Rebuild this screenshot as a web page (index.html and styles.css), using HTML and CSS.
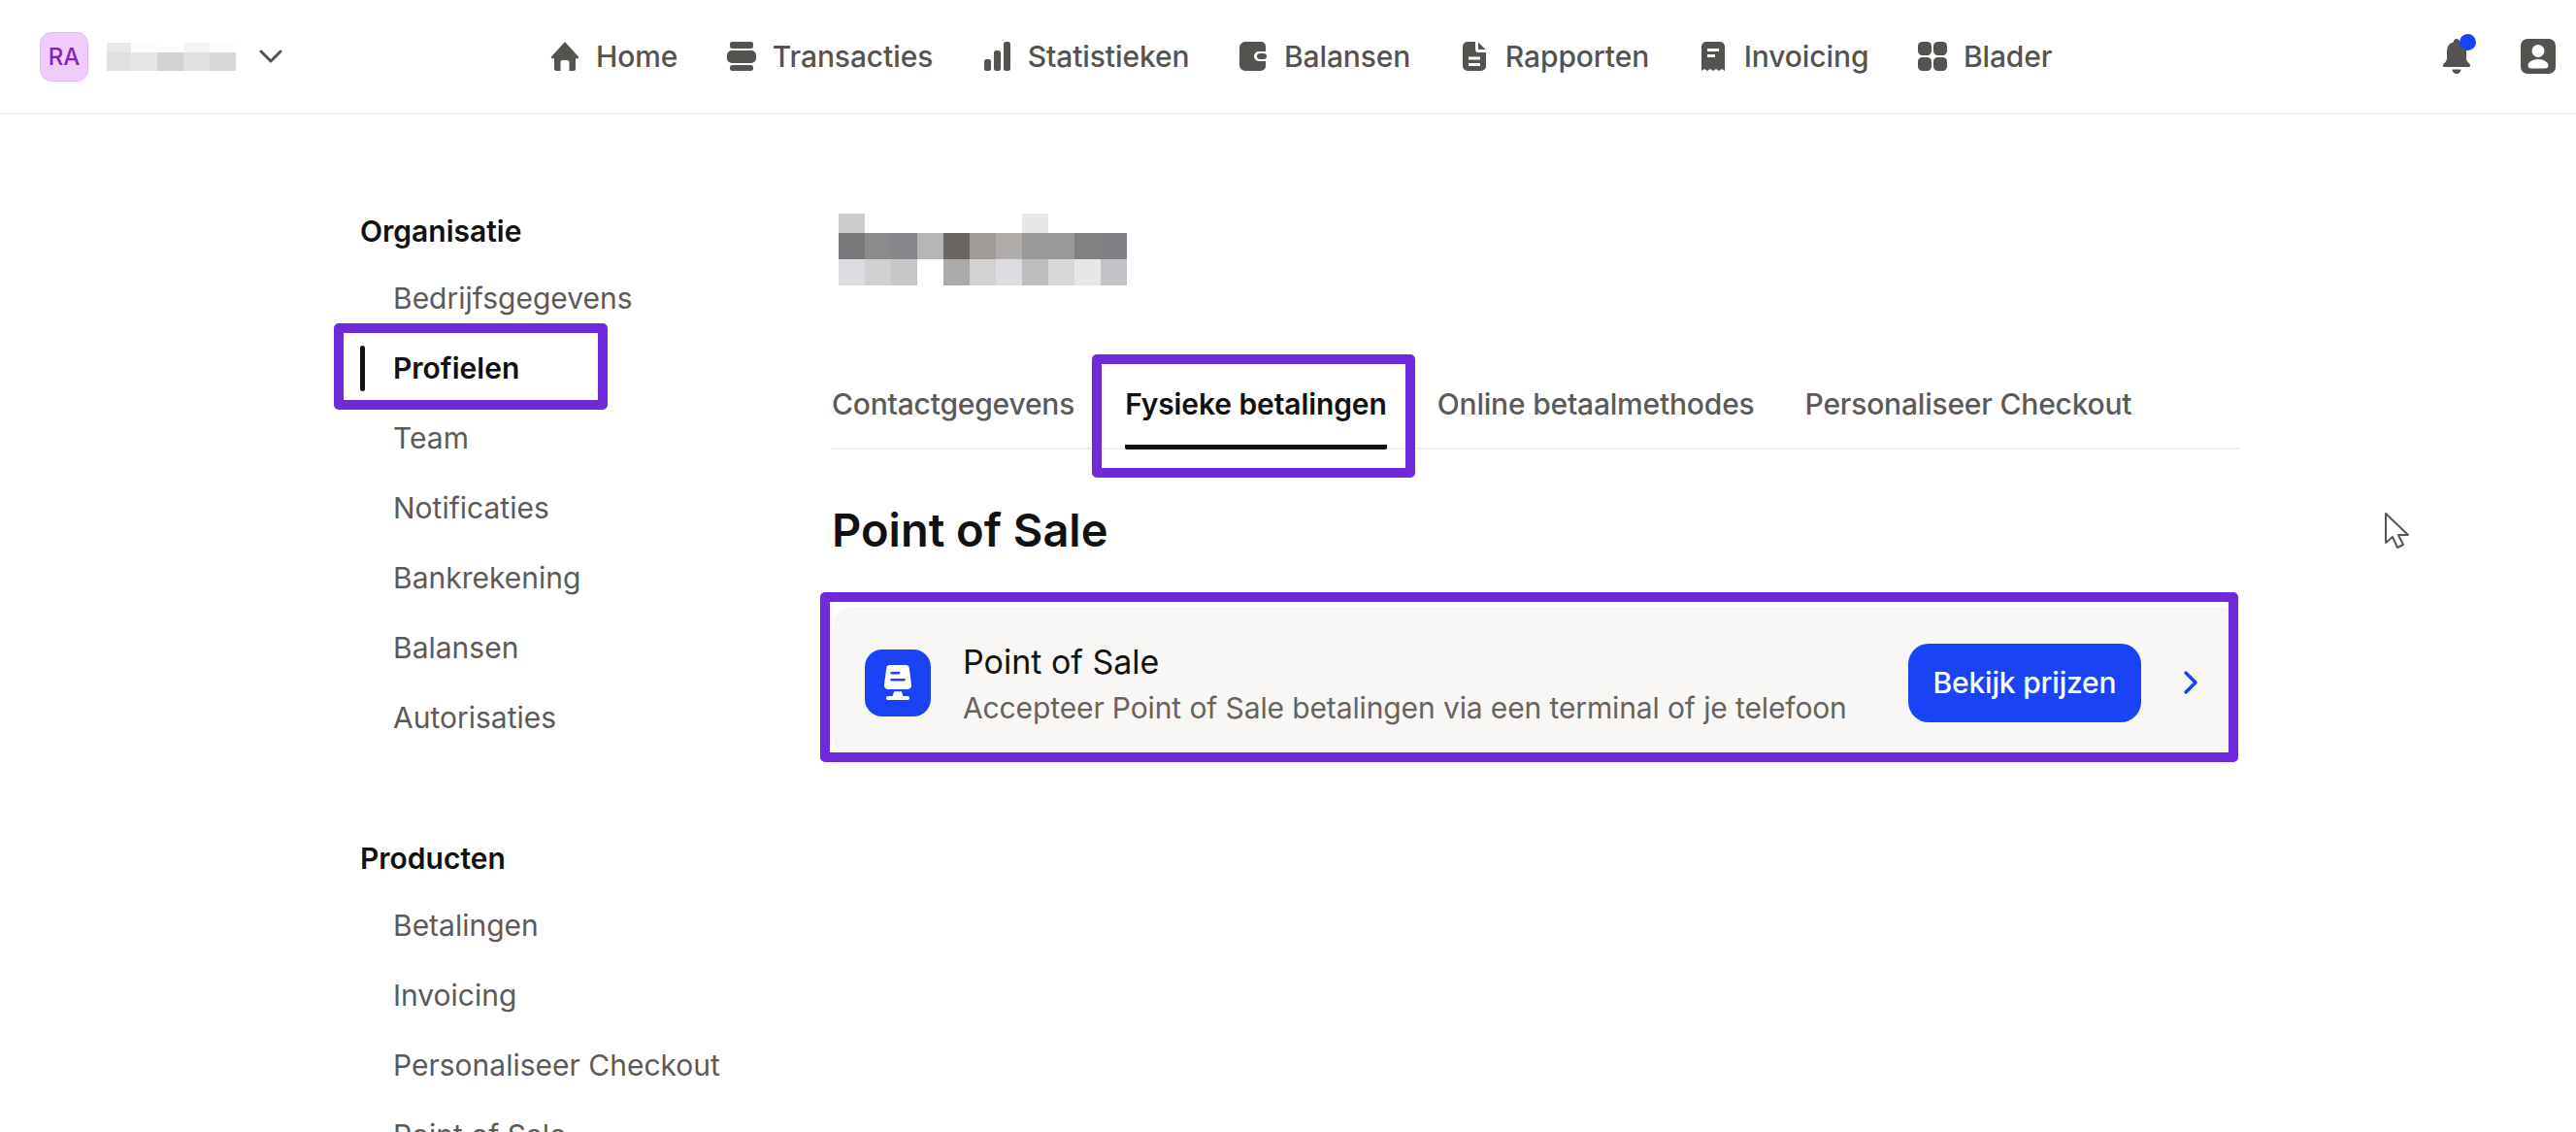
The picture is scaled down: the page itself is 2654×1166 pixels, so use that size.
FILE: index.html
```html
<!DOCTYPE html>
<html lang="en">

<head>
    <meta charset="UTF-8">
    <title>Point of Sale</title>
    <link rel="stylesheet" href="styles.css">
</head>

<body>
    <header class="topbar">
        <div class="account">
            <div class="avatar">RA</div>
            <svg class="redact-name" width="133" height="29" viewBox="0 0 133 29">
                <rect x="0" y="0" width="25" height="10" fill="#e9e9e9" />
                <rect x="25" y="0" width="27" height="10" fill="#fdfdfd" />
                <rect x="79" y="0" width="27" height="10" fill="#f4f4f4" />
                <rect x="106" y="0" width="27" height="10" fill="#fdfdfd" />
                <rect x="0" y="10" width="25" height="19" fill="#e0e0e0" />
                <rect x="25" y="10" width="27" height="19" fill="#e6e6e6" />
                <rect x="52" y="10" width="27" height="19" fill="#d2d2d2" />
                <rect x="79" y="10" width="27" height="19" fill="#e0e0e0" />
                <rect x="106" y="10" width="27" height="19" fill="#d8d8d8" />
            </svg>
            <svg class="account-chevron" width="24" height="16" viewBox="0 0 24 16">
                <path d="M2 3l10 10L22 3" fill="none" stroke="#55534f" stroke-width="3" stroke-linecap="round" stroke-linejoin="round" />
            </svg>
        </div>

        <nav class="mainnav">
            <a class="navitem">
                <svg class="navicon" viewBox="0 0 32 32">
                    <path d="M16 1L30 16.5c.5.7 0 1.7-.9 1.7H27V29a2 2 0 0 1-2 2h-4.500V22a2 2 0 0 0-2-2h-5a2 2 0 0 0-2 2v9H7a2 2 0 0 1-2-2V18.200H2.900c-.9 0-1.400-1-.9-1.700z" />
                </svg>
                Home
            </a>
            <a class="navitem">
                <svg class="navicon" viewBox="0 0 32 32">
                    <rect x="4" y="1" width="24" height="7" rx="2.500" />
                    <rect x="1" y="10" width="30" height="13" rx="5" />
                    <rect x="4" y="25" width="24" height="6" rx="2.500" />
                </svg>
                Transacties
            </a>
            <a class="navitem">
                <svg class="navicon" viewBox="0 0 32 32">
                    <rect x="3" y="19" width="7" height="12" rx="2.500" />
                    <rect x="13" y="10" width="7" height="21" rx="2.500" />
                    <rect x="23" y="1" width="7" height="30" rx="2.500" />
                </svg>
                Statistieken
            </a>
            <a class="navitem">
                <svg class="navicon" viewBox="0 0 32 32">
                    <path d="M8 1h16a5 5 0 0 1 5 4.500V11h-7a5 5 0 0 0 0 10h7v5a5 5 0 0 1-5 5H8a6 6 0 0 1-6-6V7a6 6 0 0 1 6-6z" />
                    <rect x="20" y="13" width="10" height="6" rx="3" />
                </svg>
                Balansen
            </a>
            <a class="navitem">
                <svg class="navicon" viewBox="0 0 32 32">
                    <path fill-rule="evenodd" d="M9 1h8v8a3 3 0 0 0 3 3h8v14a5 5 0 0 1-5 5H9a5 5 0 0 1-5-5V6a5 5 0 0 1 5-5zM10 16.500v3h12v-3zM10 23v3h12v-3z" />
                    <path d="M20 1.500L27.500 9H21a1 1 0 0 1-1-1z" />
                </svg>
                Rapporten
            </a>
            <a class="navitem">
                <svg class="navicon" viewBox="0 0 32 32">
                    <path fill-rule="evenodd" d="M9 1h14a5 5 0 0 1 5 5v25l-3-2-3 2-3-2-3 2-3-2-3 2-3-2-3 2V6a5 5 0 0 1 5-5zM10 8v3h12V8zM10 14v3h8v-3z" />
                </svg>
                Invoicing
            </a>
            <a class="navitem">
                <svg class="navicon" viewBox="0 0 32 32">
                    <rect x="1" y="1" width="14" height="14" rx="4.500" />
                    <rect x="17" y="1" width="14" height="14" rx="4.500" />
                    <rect x="1" y="17" width="14" height="14" rx="4.500" />
                    <rect x="17" y="17" width="14" height="14" rx="4.500" />
                </svg>
                Blader
            </a>
        </nav>

        <div class="topbar-right">
            <div class="bell">
                <svg class="bell-icon" viewBox="0 0 32 38">
                    <path d="M16 1c2 0 3.200 1.500 3.200 3.200C24.500 5.500 26 10 26 15v6c0 2.500 1.500 4 3.500 6 1.200 1.300.5 3-1.300 3H3.800c-1.800 0-2.500-1.700-1.300-3 2-2 3.500-3.500 3.500-6v-6c0-5 1.500-9.500 6.800-10.800C12.800 2.500 14 1 16 1z" />
                    <path d="M11.500 32.500h9a4.500 4.500 0 0 1-9 0z" />
                </svg>
                <span class="bell-dot"></span>
            </div>
            <svg class="user-icon" viewBox="0 0 36 36">
                <path fill-rule="evenodd" d="M7 0h22a7 7 0 0 1 7 7v22a7 7 0 0 1-7 7H7a7 7 0 0 1-7-7V7a7 7 0 0 1 7-7zM18 6a6.500 6.500 0 1 0 0 13 6.500 6.500 0 0 0 0-13zM18 21c-6 0-10.500 3-10.500 6.500 0 2 1.500 3 3.500 3h14c2 0 3.500-1 3.500-3C28.500 24 24 21 18 21z" />
            </svg>
        </div>
    </header>

    <div class="page">
        <aside class="sidebar">
            <h3 class="side-title">Organisatie</h3>
            <ul class="side-list">
                <li>Bedrijfsgegevens</li>
                <li class="active">Profielen</li>
                <li>Team</li>
                <li>Notificaties</li>
                <li>Bankrekening</li>
                <li>Balansen</li>
                <li>Autorisaties</li>
            </ul>

            <h3 class="side-title side-title-second">Producten</h3>
            <ul class="side-list">
                <li>Betalingen</li>
                <li>Invoicing</li>
                <li>Personaliseer Checkout</li>
                <li>Point of Sale</li>
            </ul>
        </aside>

        <main class="content">
            <svg class="redact-title" width="297" height="74" viewBox="0 0 297 74">
                <rect x="0" y="0" width="27" height="20" fill="#cccccc" />
                <rect x="189" y="0" width="27" height="20" fill="#e8e7e5" />

                <rect x="0" y="20" width="27" height="27" fill="#77787a" />
                <rect x="27" y="20" width="27" height="27" fill="#8b8b8b" />
                <rect x="54" y="20" width="27" height="27" fill="#87888c" />
                <rect x="81" y="20" width="27" height="27" fill="#b5b6b8" />
                <rect x="108" y="20" width="27" height="27" fill="#6a6662" />
                <rect x="135" y="20" width="27" height="27" fill="#9f9b99" />
                <rect x="162" y="20" width="27" height="27" fill="#b0aca9" />
                <rect x="189" y="20" width="27" height="27" fill="#9a9899" />
                <rect x="216" y="20" width="27" height="27" fill="#999999" />
                <rect x="243" y="20" width="27" height="27" fill="#828282" />
                <rect x="270" y="20" width="27" height="27" fill="#808084" />

                <rect x="0" y="47" width="27" height="27" fill="#dcdde0" />
                <rect x="27" y="47" width="27" height="27" fill="#d0d0d0" />
                <rect x="54" y="47" width="27" height="27" fill="#c5c6c8" />
                <rect x="108" y="47" width="27" height="27" fill="#aaaaaa" />
                <rect x="135" y="47" width="27" height="27" fill="#d4d2d0" />
                <rect x="162" y="47" width="27" height="27" fill="#dcdde0" />
                <rect x="189" y="47" width="27" height="27" fill="#bdbdbd" />
                <rect x="216" y="47" width="27" height="27" fill="#d8d7d5" />
                <rect x="243" y="47" width="27" height="27" fill="#e8e7e5" />
                <rect x="270" y="47" width="27" height="27" fill="#c2c3c6" />
            </svg>

            <div class="tabs">
                <a class="tab">Contactgegevens</a>
                <a class="tab active">Fysieke betalingen</a>
                <a class="tab">Online betaalmethodes</a>
                <a class="tab">Personaliseer Checkout</a>
            </div>

            <h2 class="section-title">Point of Sale</h2>

            <div class="pos-card">
                <div class="pos-icon">
                    <svg width="28" height="36" viewBox="0 0 36 46">
                        <path fill="#fff" d="M7 0h22a4 4 0 0 1 4 3.500L36 26a5 5 0 0 1-5 6H5a5 5 0 0 1-5-6L3 3.500A4 4 0 0 1 7 0z" />
                        <rect x="8" y="9" width="13" height="3" rx="1.500" fill="#1a43f5" />
                        <rect x="8" y="18" width="20" height="3" rx="1.500" fill="#1a43f5" />
                        <path fill="#fff" d="M13 35h10l2 6h6a2.500 2.500 0 0 1 0 5H5a2.500 2.500 0 0 1 0-5h6z" />
                    </svg>
                </div>
                <div class="pos-text">
                    <div class="pos-title">Point of Sale</div>
                    <div class="pos-sub">Accepteer Point of Sale betalingen via een terminal of je telefoon</div>
                </div>
                <button class="pos-button">Bekijk prijzen</button>
                <svg class="pos-chevron" width="16" height="26" viewBox="0 0 16 26">
                    <path d="M3 3l10 10L3 23" fill="none" stroke="#1a43f5" stroke-width="3.500" stroke-linecap="round" stroke-linejoin="round" />
                </svg>
            </div>
        </main>
    </div>

    <!-- annotation frames on top of the page -->
    <div class="frame frame-profile"></div>
    <div class="frame frame-tab"></div>
    <div class="frame frame-card"></div>

    <svg class="cursor" width="30" height="40" viewBox="0 0 30 40">
        <path d="M2 2v30l7-6 5 11 6-3-5-10h10z" fill="#fff" stroke="#55565a" stroke-width="2" stroke-linejoin="round" />
    </svg>
</body>

</html>
```

FILE: styles.css
```css
* {
    box-sizing: border-box;
}

html,
body {
    height: 100%;
}

body {
    margin: 0;
    background: #fff;
    color: #111;
    font-family: "Inter", "Liberation Sans", sans-serif;
    font-size: 30px;
    overflow: hidden;
    position: relative;
}

.topbar {
    display: flex;
    align-items: center;
    height: 118px;
    padding: 0 21px 0 41px;
    border-bottom: 2px solid #f3f3f2;
}

.account {
    display: flex;
    align-items: center;
    width: 525px;
}

.avatar {
    width: 50px;
    height: 51px;
    display: flex;
    align-items: center;
    justify-content: center;
    background: #efcdfb;
    border: 1px solid #e3b9f5;
    border-radius: 12px;
    color: #8a1fc0;
    font-size: 24px;
    font-weight: 500;
}

.redact-name {
    margin-left: 19px;
}

.account-chevron {
    margin-left: 24px;
}

.mainnav {
    display: flex;
    align-items: center;
    gap: 49.5px;
}

.navitem {
    display: flex;
    align-items: center;
    gap: 16px;
    color: #55534f;
    font-weight: 500;
    letter-spacing: -0.1px;
    white-space: nowrap;
}

.navicon {
    width: 32px;
    height: 32px;
    fill: #55534f;
}

.topbar-right {
    display: flex;
    align-items: center;
    gap: 50px;
    margin-left: auto;
}

.bell {
    position: relative;
    width: 32px;
    height: 38px;
}

.bell-icon {
    display: block;
    width: 32px;
    height: 38px;
    fill: #55534f;
}

.bell-dot {
    position: absolute;
    top: -4px;
    left: 19px;
    width: 17px;
    height: 17px;
    background: #1a43f5;
    border-radius: 50%;
}

.user-icon {
    width: 36px;
    height: 36px;
    fill: #55534f;
}

.page {
    display: flex;
    padding-left: 371px;
}

.sidebar {
    width: 486px;
    flex-shrink: 0;
    padding-top: 102px;
}

.side-title {
    margin: 0;
    font-size: 30px;
    line-height: 36px;
    font-weight: 600;
    color: #111;
}

.side-title-second {
    margin-top: 91px;
}

.side-list {
    list-style: none;
    margin: 15px 0 0;
    padding: 0;
}

.side-list li {
    position: relative;
    height: 72px;
    line-height: 72px;
    padding-left: 34px;
    color: #5c5a57;
    white-space: nowrap;
}

.side-list li.active {
    color: #111;
    font-weight: 600;
}

.side-list li.active::before {
    content: "";
    position: absolute;
    left: 0;
    top: 13px;
    width: 5px;
    height: 47px;
    background: #111;
    border-radius: 3px;
}

.content {
    width: 1451px;
}

.redact-title {
    display: block;
    margin: 102px 0 0 7px;
}

.tabs {
    display: flex;
    gap: 52px;
    margin-top: 98px;
    border-bottom: 2px solid #f1f0ef;
    height: 71px;
}

.tab {
    height: 71px;
    line-height: 49px;
    color: #5c5a57;
    font-weight: 500;
    letter-spacing: -0.2px;
    white-space: nowrap;
}

.tab.active {
    color: #111;
    font-weight: 600;
    letter-spacing: -0.1px;
    border-bottom: 5px solid #111;
    border-radius: 0 0 2px 2px;
}

.section-title {
    margin: 54px 0 0;
    font-size: 47px;
    line-height: 58px;
    font-weight: 600;
    color: #111;
}

.pos-card {
    display: flex;
    align-items: center;
    height: 156px;
    margin-top: 50px;
    padding: 0 43px 0 34px;
    background: #f9f7f5;
    border-radius: 24px;
}

.pos-icon {
    width: 68px;
    height: 69px;
    display: flex;
    align-items: center;
    justify-content: center;
    flex-shrink: 0;
    background: #1a43f5;
    border-radius: 18px;
}

.pos-text {
    margin-left: 33px;
    padding-top: 3px;
    flex: 1;
}

.pos-title {
    font-size: 34px;
    line-height: 44px;
    color: #111;
}

.pos-sub {
    margin-top: 4px;
    line-height: 42px;
    letter-spacing: -0.12px;
    color: #66635f;
}

.pos-button {
    width: 240px;
    height: 81px;
    border: none;
    border-radius: 21px;
    background: #1a43f5;
    color: #fff;
    font-family: inherit;
    font-size: 30px;
    font-weight: 500;
    letter-spacing: -0.2px;
}

.pos-chevron {
    margin-left: 43px;
}

.frame {
    position: absolute;
    border: 10px solid #6f2bda;
    border-radius: 5px;
}

.frame-profile {
    left: 344px;
    top: 333px;
    width: 282px;
    height: 89px;
}

.frame-tab {
    left: 1125px;
    top: 365px;
    width: 333px;
    height: 127px;
}

.frame-card {
    left: 845px;
    top: 610px;
    width: 1461px;
    height: 175px;
}

.cursor {
    position: absolute;
    left: 2456px;
    top: 527px;
}
```
